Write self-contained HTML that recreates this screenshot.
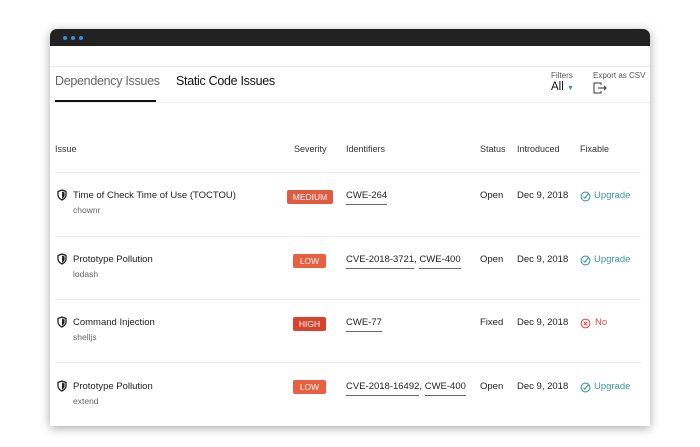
<!DOCTYPE html>
<html><head><style>
body{margin:0;width:700px;height:447px;background:#fff;font-family:"Liberation Sans",sans-serif;position:relative;overflow:hidden;color:#222}
.card{position:absolute;left:50px;top:29px;width:600px;height:397px;background:#fff;border-radius:7px 7px 0 0;box-shadow:0 2px 10px rgba(0,0,0,.35)}
.bar{position:absolute;left:0;top:0;width:600px;height:17px;background:#222;border-radius:7px 7px 0 0}
.dot{position:absolute;top:7px;width:4px;height:4px;border-radius:50%;background:#2f8fe8}
.a{position:absolute;white-space:nowrap}
.hl{position:absolute;height:1px;background:#eee}
.h{font-size:9px;color:#333;top:144px}
.t{font-size:9.5px;color:#222}
.s{font-size:8.5px;color:#666}
.b{position:absolute;color:#fff;font-size:8.5px;text-align:center;height:14px;line-height:14px;border-radius:2px}
.u{border-bottom:1px solid #666;padding-bottom:3px}
.g{color:#3a9a9a}
</style></head><body>
<div class="card">
<div class="bar"><div class="dot" style="left:13px"></div><div class="dot" style="left:21px"></div><div class="dot" style="left:29px"></div></div>
</div>
<div class="hl" style="left:50px;width:600px;top:66px;background:#e8e8e8"></div>
<div class="hl" style="left:50px;width:600px;top:102px;background:#eee"></div>
<div class="a" style="left:55px;top:74px;font-size:12.5px;letter-spacing:-0.3px;color:#666">Dependency Issues</div>
<div style="position:absolute;left:55px;top:100px;width:101px;height:2px;background:#111"></div>
<div class="a" style="left:176px;top:74px;font-size:12.5px;letter-spacing:-0.3px;color:#111">Static Code Issues</div>
<div class="a" style="left:551px;top:71px;font-size:8px;color:#555">Filters</div>
<div class="a" style="left:551px;top:81px;font-size:11.5px;color:#111">All <span style="color:#2f8fe8;font-size:7px">▼</span></div>
<div class="a" style="left:593px;top:71px;font-size:8px;color:#555">Export as CSV</div>
<svg style="position:absolute;left:593px;top:82px" width="14" height="12" viewBox="0 0 14 12"><path d="M8 3V1H1v10h7V9M5 6h8M11 4l2 2-2 2" fill="none" stroke="#333" stroke-width="1"/></svg>
<div class="a h" style="left:55px">Issue</div>
<div class="a h" style="left:294px">Severity</div>
<div class="a h" style="left:346px">Identifiers</div>
<div class="a h" style="left:480px">Status</div>
<div class="a h" style="left:517px">Introduced</div>
<div class="a h" style="left:580px">Fixable</div>
<div class="hl" style="left:55px;width:586px;top:172px"></div>
<div class="hl" style="left:55px;width:586px;top:236px"></div>
<div class="hl" style="left:55px;width:586px;top:299px"></div>
<div class="hl" style="left:55px;width:586px;top:362px"></div>

<svg width="0" height="0" style="position:absolute"><defs>
<symbol id="sh" viewBox="0 0 12 12"><path d="M6 1L2 2.5V6c0 2.5 2 4 4 5 2-1 4-2.5 4-5V2.5Z" fill="none" stroke="#222" stroke-width="1.3"/><path d="M6 2.5L8.6 3.5V6c0 1.8-1.3 2.9-2.6 3.6Z" fill="#222"/></symbol>
<symbol id="ok" viewBox="0 0 12 12"><circle cx="6" cy="6" r="4.8" fill="none" stroke="#3a9a9a" stroke-width="1.2"/><path d="M3.8 6.2l1.6 1.6L9 3" fill="none" stroke="#3a9a9a" stroke-width="1.2"/></symbol>
<symbol id="no" viewBox="0 0 12 12"><circle cx="6" cy="6" r="4.8" fill="none" stroke="#d8453a" stroke-width="1.1"/><path d="M4 4l4 4M8 4l-4 4" stroke="#d8453a" stroke-width="1.1"/></symbol>
</defs></svg>

<svg style="position:absolute;left:56px;top:189px" width="12" height="12"><use href="#sh"/></svg>
<div class="a t" style="left:73px;top:190px">Time of Check Time of Use (TOCTOU)</div>
<div class="a s" style="left:73px;top:205px">chownr</div>
<div class="b" style="left:287px;top:190px;width:46px;background:#e05a40">MEDIUM</div>
<div class="a t" style="left:346px;top:190px"><span class="u">CWE-264</span></div>
<div class="a t" style="left:480px;top:190px">Open</div>
<div class="a t" style="left:517px;top:190px">Dec 9, 2018</div>
<svg style="position:absolute;left:580px;top:191px" width="11" height="11"><use href="#ok"/></svg>
<div class="a t g" style="left:594px;top:190px">Upgrade</div>

<svg style="position:absolute;left:56px;top:253px" width="12" height="12"><use href="#sh"/></svg>
<div class="a t" style="left:73px;top:254px">Prototype Pollution</div>
<div class="a s" style="left:73px;top:269px">lodash</div>
<div class="b" style="left:293px;top:254px;width:33px;background:#e8603f">LOW</div>
<div class="a t" style="left:346px;top:254px"><span class="u">CVE-2018-3721</span>, <span class="u">CWE-400</span></div>
<div class="a t" style="left:480px;top:254px">Open</div>
<div class="a t" style="left:517px;top:254px">Dec 9, 2018</div>
<svg style="position:absolute;left:580px;top:255px" width="11" height="11"><use href="#ok"/></svg>
<div class="a t g" style="left:594px;top:254px">Upgrade</div>

<svg style="position:absolute;left:56px;top:316px" width="12" height="12"><use href="#sh"/></svg>
<div class="a t" style="left:73px;top:317px">Command Injection</div>
<div class="a s" style="left:73px;top:332px">shelljs</div>
<div class="b" style="left:293px;top:317px;width:33px;background:#d8432e">HIGH</div>
<div class="a t" style="left:346px;top:317px"><span class="u">CWE-77</span></div>
<div class="a t" style="left:480px;top:317px">Fixed</div>
<div class="a t" style="left:517px;top:317px">Dec 9, 2018</div>
<svg style="position:absolute;left:580px;top:318px" width="11" height="11"><use href="#no"/></svg>
<div class="a t" style="left:595px;top:317px;color:#d8453a">No</div>

<svg style="position:absolute;left:56px;top:380px" width="12" height="12"><use href="#sh"/></svg>
<div class="a t" style="left:73px;top:381px">Prototype Pollution</div>
<div class="a s" style="left:73px;top:396px">extend</div>
<div class="b" style="left:293px;top:380px;width:33px;background:#e8603f">LOW</div>
<div class="a t" style="left:346px;top:381px"><span class="u">CVE-2018-16492</span>, <span class="u">CWE-400</span></div>
<div class="a t" style="left:480px;top:381px">Open</div>
<div class="a t" style="left:517px;top:381px">Dec 9, 2018</div>
<svg style="position:absolute;left:580px;top:382px" width="11" height="11"><use href="#ok"/></svg>
<div class="a t g" style="left:594px;top:381px">Upgrade</div>
</body></html>
